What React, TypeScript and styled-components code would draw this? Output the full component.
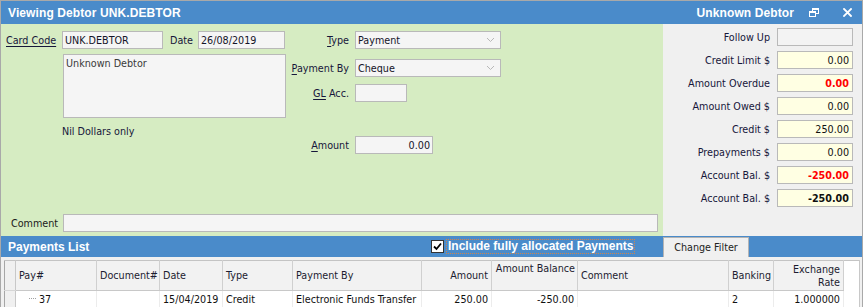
import styled, { createGlobalStyle } from "styled-components";

const GlobalStyle = createGlobalStyle`
    html, body {
        margin: 0;
        padding: 0;
        background: #ffffff;
    }
    body {
        font-family: "DejaVu Sans Condensed", "Liberation Sans", Arial, sans-serif;
        font-size: 10.7px;
        color: #16163a;
    }
    * {
        box-sizing: border-box;
    }
`;

const summary = [
    { label: "Follow Up", value: "", tone: "empty" },
    { label: "Credit Limit $", value: "0.00", tone: "normal" },
    { label: "Amount Overdue", value: "0.00", tone: "red" },
    { label: "Amount Owed $", value: "0.00", tone: "normal" },
    { label: "Credit $", value: "250.00", tone: "normal" },
    { label: "Prepayments $", value: "0.00", tone: "normal" },
    { label: "Account Bal. $", value: "-250.00", tone: "red" },
    { label: "Account Bal. $", value: "-250.00", tone: "bold" },
];

const columns = [
    { title: "Pay#", width: 81, align: "left" },
    { title: "Document#", width: 63, align: "left" },
    { title: "Date", width: 63, align: "left" },
    { title: "Type", width: 70, align: "left" },
    { title: "Payment By", width: 129, align: "left" },
    { title: "Amount", width: 70, align: "right" },
    { title: "Amount Balance", width: 86, align: "right", top: true },
    { title: "Comment", width: 151, align: "left" },
    { title: "Banking", width: 45, align: "left" },
    { title: "Exchange\nRate", width: 70, align: "right" },
];

const rows = [
    ["37", "", "15/04/2019", "Credit", "Electronic Funds Transfer", "250.00", "-250.00", "", "2", "1.000000"],
];

const RestoreIcon = () => (
    <svg width="10" height="9" viewBox="0 0 10 9">
        <rect x="3.5" y="0.5" width="6" height="5" fill="none" stroke="#fff" strokeWidth="1" />
        <rect x="3" y="0" width="7" height="2" fill="#fff" />
        <rect x="0.5" y="3.5" width="6" height="5" fill="#4a8bca" stroke="#fff" strokeWidth="1" />
        <rect x="0" y="3" width="7" height="2" fill="#fff" />
    </svg>
);

const CloseIcon = () => (
    <svg width="9" height="9" viewBox="0 0 9 9">
        <path d="M1 1 L8 8 M8 1 L1 8" stroke="#fff" strokeWidth="1.8" strokeLinecap="square" />
    </svg>
);

const Chevron = () => (
    <svg width="9" height="6" viewBox="0 0 9 6">
        <path d="M1 1 L4.5 4.5 L8 1" stroke="#b8b8b8" strokeWidth="1" fill="none" />
    </svg>
);

export default function App() {
    return (
        <>
            <GlobalStyle />
            <Window>
                <TitleBar>
                    <TitleText>Viewing Debtor UNK.DEBTOR</TitleText>
                    <TitleRight>
                        <TitleText>Unknown Debtor</TitleText>
                        <IconButton><RestoreIcon /></IconButton>
                        <IconButton><CloseIcon /></IconButton>
                    </TitleRight>
                </TitleBar>

                <Main>
                    <GreenPane>
                        <TopArea>
                            <LeftBlock>
                                <FieldRow>
                                    <LinkLabel $width={57}>Card Code</LinkLabel>
                                    <Input $width={101}>UNK.DEBTOR</Input>
                                    <Label $width={28} $gap={7}>Date</Label>
                                    <Input $width={87}>26/08/2019</Input>
                                </FieldRow>
                                <NameBox>Unknown Debtor</NameBox>
                                <Words>Nil Dollars only</Words>
                            </LeftBlock>

                            <MidBlock>
                                <FieldRow>
                                    <RightLabel><u>T</u>ype</RightLabel>
                                    <Select $width={146}>Payment<Chevron /></Select>
                                </FieldRow>
                                <FieldRow $top={10}>
                                    <RightLabel><u>P</u>ayment By</RightLabel>
                                    <Select $width={146}>Cheque<Chevron /></Select>
                                </FieldRow>
                                <FieldRow $top={7}>
                                    <RightLabel><u>GL</u> Acc.</RightLabel>
                                    <Input $width={52} />
                                </FieldRow>
                                <FieldRow $top={34}>
                                    <RightLabel><u>A</u>mount</RightLabel>
                                    <Input $width={78} $right>0.00</Input>
                                </FieldRow>
                            </MidBlock>
                        </TopArea>

                        <CommentRow>
                            <CommentLabel>Comment</CommentLabel>
                            <Input $width={595} />
                        </CommentRow>
                    </GreenPane>

                    <SummaryPane>
                        {summary.map((item, i) => (
                            <SummaryRow key={i}>
                                <SummaryLabel>{item.label}</SummaryLabel>
                                <SummaryValue $tone={item.tone}>{item.value}</SummaryValue>
                            </SummaryRow>
                        ))}
                    </SummaryPane>
                </Main>

                <ListBar>
                    <ListTitle>Payments List</ListTitle>
                    <CheckWrap>
                        <CheckBox>
                            <svg width="9" height="9" viewBox="0 0 9 9">
                                <path d="M1 4.5 L3.5 7 L8 1.5" stroke="#000" strokeWidth="1.8" fill="none" />
                            </svg>
                        </CheckBox>
                        <CheckLabel>Include fully allocated Payments</CheckLabel>
                    </CheckWrap>
                    <FilterButton>Change Filter</FilterButton>
                </ListBar>

                <GridArea>
                    <Grid>
                        <colgroup>
                            <col style={{ width: 11 }} />
                            {columns.map((c) => (
                                <col key={c.title} style={{ width: c.width }} />
                            ))}
                            <col />
                        </colgroup>
                        <thead>
                            <tr>
                                <SelectorCell />
                                {columns.map((c) => (
                                    <HeadCell key={c.title} $align={c.align} $top={c.top}>
                                        {c.title}
                                    </HeadCell>
                                ))}
                                <FillerCell />
                            </tr>
                        </thead>
                        <tbody>
                            {rows.map((r, i) => (
                                <tr key={i}>
                                    <SelectorCell />
                                    {r.map((v, j) => (
                                        <DataCell key={j} $align={columns[j].align}>
                                            {j === 0 ? (
                                                <>
                                                    <TreeDots />
                                                    {v}
                                                </>
                                            ) : v}
                                        </DataCell>
                                    ))}
                                    <FillerCell />
                                </tr>
                            ))}
                        </tbody>
                    </Grid>
                </GridArea>
            </Window>
        </>
    );
}

const Window = styled.div`
    width: 863px;
    height: 307px;
    border: 1px solid #a9a9a9;
    border-bottom: none;
    display: flex;
    flex-direction: column;
    overflow: hidden;
    background: #f0f0f0;
`;

const TitleBar = styled.div`
    height: 23px;
    flex: none;
    background: #4a8bca;
    display: flex;
    align-items: center;
    justify-content: space-between;
    padding: 0 10px 0 7px;
`;

const TitleText = styled.span`
    color: #ffffff;
    font-family: "Liberation Sans", Arial, sans-serif;
    font-weight: bold;
    font-size: 12px;
    letter-spacing: 0.1px;
`;

const TitleRight = styled.div`
    display: flex;
    align-items: center;
`;

const IconButton = styled.span`
    display: flex;
    align-items: center;
    justify-content: center;
    width: 10px;
    height: 10px;
    margin-left: 15px;

    &:last-child {
        margin-left: 23px;
    }
`;

const Main = styled.div`
    height: 212px;
    flex: none;
    display: flex;
`;

const GreenPane = styled.div`
    width: 662px;
    flex: none;
    background: #d6ecc2;
    display: flex;
    flex-direction: column;
    justify-content: space-between;
    padding: 7px 0 4px 4px;
`;

const TopArea = styled.div`
    display: flex;
`;

const LeftBlock = styled.div`
    width: 281px;
    display: flex;
    flex-direction: column;
`;

const MidBlock = styled.div`
    display: flex;
    flex-direction: column;
    margin-left: 5px;
`;

const FieldRow = styled.div<{ $top?: number }>`
    display: flex;
    align-items: center;
    height: 18px;
    margin-top: ${({ $top }) => $top ?? 0}px;
`;

const Label = styled.span<{ $width: number; $gap?: number }>`
    width: ${({ $width }) => $width}px;
    margin-left: ${({ $gap }) => $gap ?? 0}px;
    white-space: nowrap;
`;

const LinkLabel = styled.span<{ $width: number }>`
    width: ${({ $width }) => $width}px;
    padding-left: 1px;
    text-decoration: underline;
    text-underline-offset: 2px;
    white-space: nowrap;
`;

const RightLabel = styled.span`
    width: 59px;
    padding-right: 1px;
    text-align: right;
    margin-right: 5px;
    white-space: nowrap;

    u {
        text-underline-offset: 2px;
    }
`;

const Input = styled.div<{ $width: number; $right?: boolean }>`
    width: ${({ $width }) => $width}px;
    height: 18px;
    background: #f5f5f5;
    border: 1px solid #b9b9b9;
    padding: 0 2px;
    display: flex;
    align-items: center;
    justify-content: ${({ $right }) => ($right ? "flex-end" : "flex-start")};
    white-space: nowrap;
    color: #141428;
`;

const Select = styled(Input)`
    justify-content: space-between;
    padding: 0 5px 0 2px;
`;

const NameBox = styled.div`
    margin: 5px 0 0 58px;
    width: 223px;
    height: 64px;
    background: #f5f5f5;
    border: 1px solid #b9b9b9;
    padding: 2px 2px;
    color: #3a3a3a;
`;

const Words = styled.div`
    margin: 7px 0 0 57px;
`;

const CommentRow = styled.div`
    display: flex;
    align-items: center;
    height: 18px;
`;

const CommentLabel = styled.span`
    width: 58px;
    padding-left: 6px;
    color: #1a1a1a;
`;

const SummaryPane = styled.div`
    flex: 1;
    background: #f0f0f0;
    display: flex;
    flex-direction: column;
    gap: 5px;
    padding: 4px 9px 0 0;
`;

const SummaryRow = styled.div`
    display: flex;
    justify-content: flex-end;
    align-items: center;
    height: 18px;
`;

const SummaryLabel = styled.span`
    margin-right: 7px;
    white-space: nowrap;
`;

const SummaryValue = styled.div<{ $tone: string }>`
    width: 76px;
    height: 18px;
    border: 1px solid #b9b9b9;
    background: ${({ $tone }) => ($tone === "empty" ? "#f3f3f3" : "#ffffe3")};
    display: flex;
    align-items: center;
    justify-content: flex-end;
    padding-right: 3px;
    font-weight: ${({ $tone }) => ($tone === "red" || $tone === "bold" ? "bold" : "normal")};
    color: ${({ $tone }) => ($tone === "red" ? "#ff0000" : "#101010")};
`;

const ListBar = styled.div`
    height: 21px;
    flex: none;
    background: #4a8bca;
    display: flex;
    align-items: flex-end;
    padding-left: 7px;
`;

const ListTitle = styled.span`
    color: #ffffff;
    font-family: "Liberation Sans", Arial, sans-serif;
    font-weight: bold;
    font-size: 12px;
    width: 423px;
    align-self: center;
`;

const CheckWrap = styled.label`
    display: flex;
    align-items: center;
    align-self: center;
    width: 232px;
`;

const CheckBox = styled.span`
    width: 13px;
    height: 13px;
    background: #ffffff;
    border: 1px solid #333;
    display: flex;
    align-items: center;
    justify-content: center;
    margin-right: 2px;
`;

const CheckLabel = styled.span`
    color: #ffffff;
    font-family: "Liberation Sans", Arial, sans-serif;
    font-weight: bold;
    font-size: 12px;
    border: 1px dotted #d2844a;
    padding: 0 1px;
    line-height: 13px;
`;

const FilterButton = styled.div`
    width: 86px;
    height: 20px;
    background: #f0f0f0;
    border: 1px solid #b4b4b4;
    border-bottom: none;
    display: flex;
    align-items: center;
    justify-content: center;
    color: #222;
`;

const GridArea = styled.div`
    flex: 1;
    background: #f0f0f0;
    padding: 3px 2px 0 3px;
`;

const Grid = styled.table`
    width: 100%;
    border-collapse: collapse;
    table-layout: fixed;
    background: #ffffff;
    border-left: 1px solid #a6a6a6;
    border-top: 1px solid #c4c4c4;
`;

const SelectorCell = styled.td`
    background: #f0f0f0;
    border-right: 1px solid #c8c8c8;
    border-bottom: 1px solid #d6d6d6;
    padding: 0;
`;

const HeadCell = styled.th<{ $align: string; $top?: boolean }>`
    height: 30px;
    padding: ${({ $top }) => ($top ? "1px 2px 0 2px" : "0 3px")};
    font-weight: normal;
    background: #f2f2f2;
    border-right: 1px solid #d0d0d0;
    border-bottom: 1px solid #c8c8c8;
    text-align: ${({ $align }) => $align};
    vertical-align: ${({ $top }) => ($top ? "top" : "middle")};
    white-space: pre;
    line-height: 13px;
    color: #1c1c30;
    overflow: hidden;
`;

const FillerCell = styled.td`
    background: #ffffff;
    border-right: 1px solid #c8c8c8;
    padding: 0;
`;

const DataCell = styled.td<{ $align: string }>`
    height: 17px;
    padding: 0 3px;
    text-align: ${({ $align }) => $align};
    border-right: 1px solid #ececec;
    white-space: nowrap;
    overflow: hidden;
    color: #111;
`;

const TreeDots = styled.span`
    display: inline-block;
    width: 7px;
    margin: 0 3px 3px 10px;
    border-top: 1px dotted #a0a0a0;
    vertical-align: middle;
`;
